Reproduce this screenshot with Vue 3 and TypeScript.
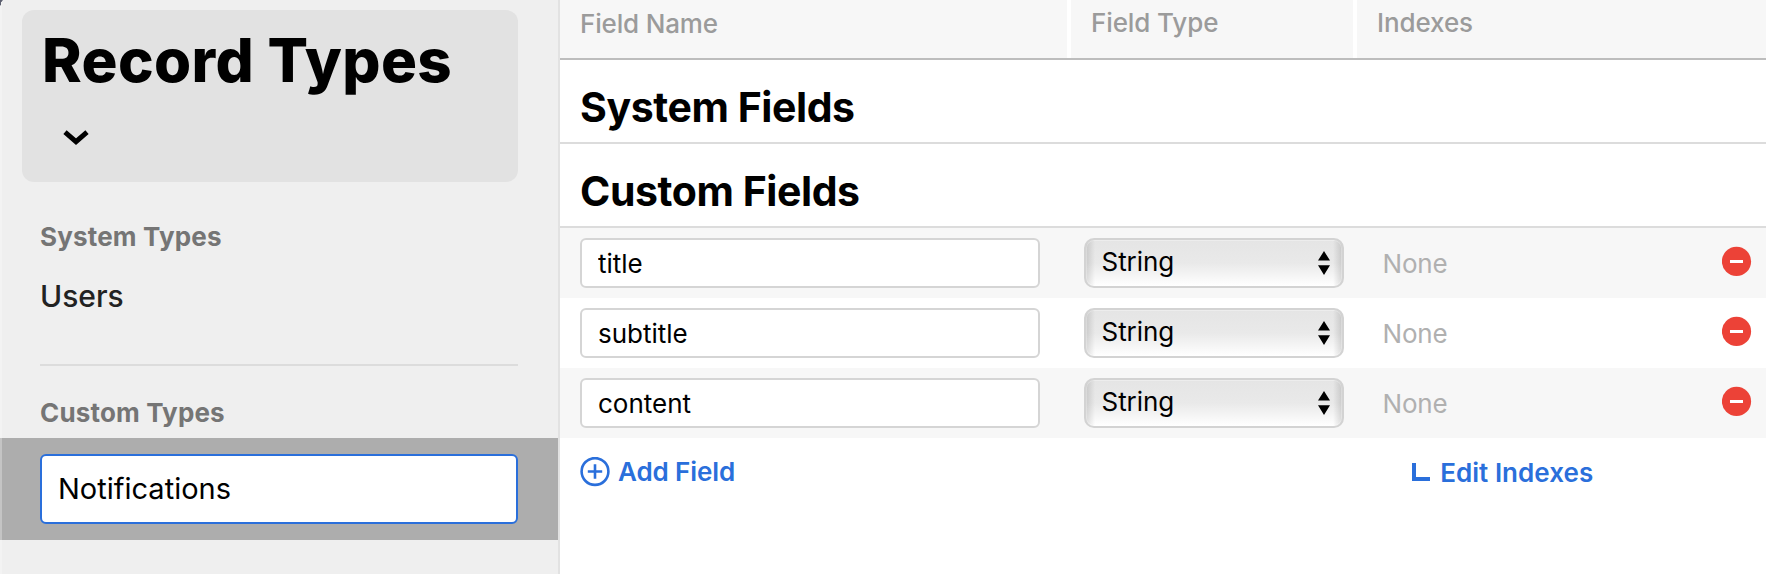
<script setup lang="ts">
import { ref } from 'vue'

interface Field {
  id: number
  name: string
  type: string
  indexes: string
}

const typeName = ref('Notifications')
const fields = ref<Field[]>([
  { id: 1, name: 'title', type: 'String', indexes: 'None' },
  { id: 2, name: 'subtitle', type: 'String', indexes: 'None' },
  { id: 3, name: 'content', type: 'String', indexes: 'None' },
])

let nextId = 4

function addField(): void {
  fields.value.push({ id: nextId++, name: '', type: 'String', indexes: 'None' })
}

function removeField(id: number): void {
  fields.value = fields.value.filter((f) => f.id !== id)
}
</script>

<template>
  <div class="window">
    <aside class="sidebar">
      <div class="switcher">
        <h1 class="switcher-title">Record Types</h1>
        <svg class="chevron" width="26" height="16" viewBox="0 0 26 16">
          <path d="M2 2.2 L13 11.6 L24 2.2" fill="none" stroke="#000" stroke-width="5" />
        </svg>
      </div>
      <div class="group-label system-label">System Types</div>
      <div class="type-item">Users</div>
      <div class="divider"></div>
      <div class="group-label custom-label">Custom Types</div>
      <div class="selected">
        <input v-model="typeName" class="type-input" type="text" spellcheck="false" />
      </div>
    </aside>

    <main class="content">
      <div class="head">
        <div class="head-cell name">Field Name</div>
        <div class="head-cell">Field Type</div>
        <div class="head-cell">Indexes</div>
      </div>

      <h2 class="section">System Fields</h2>
      <h2 class="section">Custom Fields</h2>

      <div v-for="field in fields" :key="field.id" class="row">
        <input v-model="field.name" class="name-input" type="text" spellcheck="false" />
        <button class="select" type="button">
          <span>{{ field.type }}</span>
          <svg width="12" height="24" viewBox="0 0 12 24">
            <path d="M6 0 L12 9.6 H0 Z M0 14.2 H12 L6 24 Z" />
          </svg>
        </button>
        <span class="none">{{ field.indexes }}</span>
        <button class="remove" type="button" @click="removeField(field.id)">
          <svg width="30" height="30" viewBox="0 0 30 30">
            <circle cx="14.5" cy="15.4" r="14.6" fill="#ec4237" />
            <rect x="8" y="14" width="13" height="3" fill="#fff" />
          </svg>
        </button>
      </div>

      <div class="actions">
        <button class="action add" type="button" @click="addField">
          <svg width="30" height="30" viewBox="0 0 30 30">
            <circle cx="15" cy="14.5" r="13.4" fill="none" stroke="#2a6fdb" stroke-width="2.6" />
            <path d="M15 7.3 V21.7 M7.8 14.5 H22.2" stroke="#2a6fdb" stroke-width="2.6" />
          </svg>
          <span>Add Field</span>
        </button>
        <button class="action edit" type="button">
          <svg width="18" height="18" viewBox="0 0 18 18">
            <path d="M2 0 V16 H18" fill="none" stroke="#2a6fdb" stroke-width="4" />
          </svg>
          <span>Edit Indexes</span>
        </button>
      </div>
    </main>
  </div>
</template>

<style>
html,
body {
  background: #fff;
  overflow: hidden;
}
</style>

<style scoped>
.window {
  display: flex;
  width: 1766px;
  height: 574px;
  overflow: hidden;
  background: #fff;
  font-family: Inter, 'Liberation Sans', sans-serif;
  color: #000;
}

.window * {
  box-sizing: border-box;
}

button {
  margin: 0;
  padding: 0;
  border: 0;
  background: none;
  font: inherit;
  color: inherit;
}

input {
  margin: 0;
  outline: none;
  font-family: inherit;
  color: #000;
}

svg {
  display: block;
  flex: none;
}

/* Sidebar */
.sidebar {
  position: relative;
  flex: none;
  width: 560px;
  padding-top: 10px;
  border-right: 2px solid #e2e2e2;
  background: #efefef;
}

.sidebar::before {
  content: '';
  position: absolute;
  left: 0;
  top: 0;
  width: 2px;
  height: 100%;
  background: rgba(255, 255, 255, 0.28);
}

.sidebar::after {
  content: '';
  position: absolute;
  left: 0;
  top: 0;
  width: 3px;
  height: 10px;
  background: radial-gradient(ellipse 3px 10px at 100% 100%, transparent 92%, #5d6070 100%);
}

.switcher {
  width: 496px;
  height: 172px;
  margin-left: 22px;
  padding: 12px 0 0 20px;
  border-radius: 12px;
  background: #e2e2e2;
}

.switcher-title {
  margin: 0;
  font-size: 60px;
  font-weight: 800;
  line-height: 76px;
  letter-spacing: 0.38px;
  white-space: nowrap;
}

.chevron {
  margin: 32px 0 0 20.5px;
}

.group-label {
  margin-left: 40px;
  height: 32px;
  font-size: 26px;
  font-weight: 700;
  line-height: 32px;
  letter-spacing: 0.16px;
  color: #757575;
}

.system-label {
  margin-top: 39px;
}

.type-item {
  margin: 25px 0 0 40px;
  height: 36px;
  font-size: 30px;
  font-weight: 500;
  line-height: 36px;
  color: #222;
}

.divider {
  width: 478px;
  height: 2px;
  margin: 50px 0 0 40px;
  background: #dcdcdc;
}

.custom-label {
  margin-top: 31px;
}

.selected {
  height: 102px;
  margin-top: 9px;
  padding: 16px 40px;
  background: #adadad;
}

.type-input {
  display: block;
  width: 478px;
  height: 70px;
  padding: 0 16px 1px;
  border: 2px solid #2a6fdb;
  border-radius: 6px;
  background: #fff;
  font-size: 29px;
}

/* Field table */
.content {
  flex: 1;
  min-width: 0;
}

.head {
  display: grid;
  grid-template-columns: 507px 282px 1fr;
  gap: 4px;
  height: 60px;
  border-bottom: 2px solid #bdbdbd;
}

.head-cell {
  height: 58px;
  padding: 7px 0 0 20px;
  background: #f7f7f7;
  font-size: 26px;
  font-weight: 500;
  line-height: 32px;
  letter-spacing: -0.1px;
  color: #9b9b9b;
}

.head-cell.name {
  padding-top: 8px;
  letter-spacing: -0.16px;
}

.section {
  margin: 0;
  height: 84px;
  padding: 22px 0 0 20px;
  border-bottom: 2px solid #dcdcdc;
  font-size: 41px;
  font-weight: 700;
  line-height: 50px;
  letter-spacing: -0.43px;
}

.row {
  display: flex;
  align-items: center;
  height: 70px;
  padding-left: 20px;
}

.row:nth-of-type(even) {
  background: #f7f7f7;
}

.name-input {
  width: 460px;
  height: 50px;
  padding: 1px 16px 0;
  border: 2px solid #d5d5d5;
  border-radius: 6px;
  background: #fff;
  font-size: 26px;
}

.select {
  display: flex;
  align-items: center;
  justify-content: space-between;
  width: 260px;
  height: 50px;
  margin-left: 44px;
  padding: 0 12px 0 15.5px;
  border: 2px solid #d3d3d3;
  border-radius: 10px;
  background:
    linear-gradient(90deg, rgba(0, 0, 0, 0.13), transparent 9px, transparent calc(100% - 9px), rgba(0, 0, 0, 0.13)),
    linear-gradient(#e5e5e5, #e9e9e9 50%, #fff);
  box-shadow: inset 0 0 0 1px rgba(255, 255, 255, 0.3);
  font-size: 26px;
  letter-spacing: -0.05px;
  color: #000;
}

.select span {
  position: relative;
  top: -2px;
}

.none {
  margin-left: 38.5px;
  font-size: 26px;
  letter-spacing: -0.18px;
  color: #b0b0b0;
}

.remove {
  margin: 0 14px 4px auto;
}

.actions {
  display: flex;
  align-items: flex-start;
  padding: 18px 0 0 20px;
}

.action {
  display: flex;
  align-items: center;
  color: #2a6fdb;
  font-size: 26px;
  font-weight: 600;
  letter-spacing: -0.1px;
  line-height: 32px;
}

.add {
  gap: 8px;
}

.edit {
  gap: 10px;
  margin: 1px 0 0 677px;
  letter-spacing: 0.05px;
}

.edit svg {
  margin-top: -2px;
}
</style>
